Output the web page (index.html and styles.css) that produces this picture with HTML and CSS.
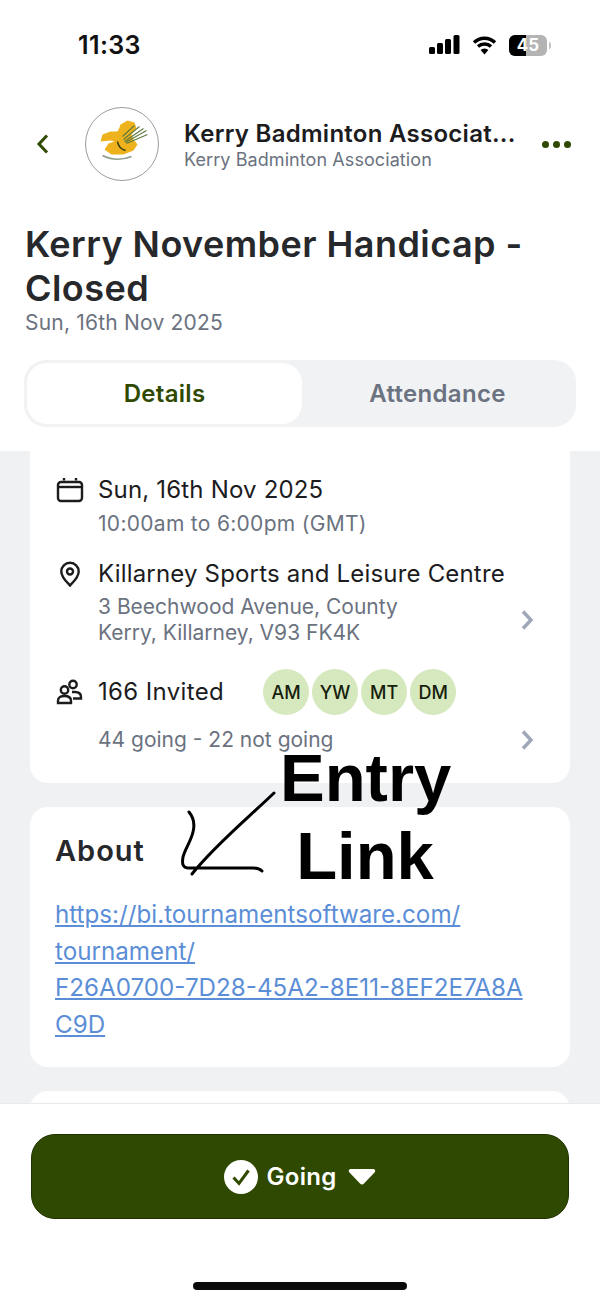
FILE: index.html
```html
<!DOCTYPE html>
<html lang="en">
<head>
<meta charset="utf-8">
<title>Kerry November Handicap</title>
<link rel="stylesheet" href="styles.css">
</head>
<body>
<div class="screen">
  <div class="status">
    <span class="time">11:33</span>
    <div class="status-icons">
      <svg class="signal" width="31" height="20" viewBox="0 0 31 20"><rect x="0" y="12" width="6" height="7" rx="1.5"/><rect x="8" y="8" width="6" height="11" rx="1.5"/><rect x="16" y="4" width="6" height="15" rx="1.5"/><rect x="24.500" y="0" width="6" height="19" rx="1.5"/></svg>
      <svg class="wifi" width="25" height="19" viewBox="0 0 24 19"><path d="M1.500 6.500a15 15 0 0 1 21 0M5.500 10.500a9.500 9.500 0 0 1 13 0" fill="none" stroke="#000" stroke-width="3.400" /><path d="M12 18.500l-3.900-4.500a5.500 5.500 0 0 1 7.800 0z"/></svg>
      <div class="battery"><span class="battery-fill"></span><span class="battery-num">45</span></div>
      <span class="battery-cap"></span>
    </div>
  </div>

  <header class="head">
    <svg class="back" width="14" height="22" viewBox="0 0 14 22"><path d="M11 2.500 3 11l8 8.500" fill="none" stroke="#2f4a00" stroke-width="3"/></svg>
    <div class="logo">
      <svg width="71" height="71" viewBox="1.500 1.500 71 71">
        <path d="M36 18 43 14 50 16 52 22 47 28 49 33 53 38 49 44 39 48 27 48 20 43 24 37 30 35 26 34 16 35 18 28 26 25 33 25 35 21Z" fill="#eeb31c"/>
        <path d="M40 35 59 22M41 36 62 24M42 37 63 28M38 30 50 19M39 33 55 20" stroke="#5f7a3e" stroke-width="1.100" fill="none"/>
        <path d="M33 35q1 7 8 9" stroke="#2c3a12" stroke-width="1.500" fill="none"/>
        <path d="M18 49q14 7 29 1" stroke="#8f9f8c" stroke-width="1.600" fill="none"/>
      </svg>
    </div>
    <div class="org">
      <div class="org-name">Kerry Badminton Associat...</div>
      <div class="org-sub">Kerry Badminton Association</div>
    </div>
    <div class="dots"><i></i><i></i><i></i></div>
  </header>

  <div class="heading">
    <h1>Kerry November Handicap - Closed</h1>
    <p>Sun, 16th Nov 2025</p>
  </div>

  <div class="tabs">
    <div class="tab active">Details</div>
    <div class="tab">Attendance</div>
  </div>

  <main class="scroll">
    <section class="card info">
      <div class="row date">
        <svg class="ico" width="28" height="26" viewBox="0 0 28 26"><rect x="2" y="5" width="24" height="19" rx="3" fill="none" stroke="#1c1c1e" stroke-width="2.400"/><path d="M2 10h24" stroke="#1c1c1e" stroke-width="2.400"/><path d="M8 1v2.500M20 1v2.500" stroke="#1c1c1e" stroke-width="2.400"/></svg>
        <div class="row-text">
          <div class="main-line">Sun, 16th Nov 2025</div>
          <div class="sub-line wide">10:00am to 6:00pm (GMT)</div>
        </div>
      </div>
      <div class="row place">
        <svg class="ico" width="28" height="26" viewBox="0 0 28 26"><path d="M14 24.500c-1-1.500-8.700-7.500-8.700-14a8.700 8.700 0 0 1 17.400 0c0 6.500-7.700 12.500-8.700 14z" fill="none" stroke="#1c1c1e" stroke-width="2.400"/><circle cx="14" cy="10.500" r="3" fill="none" stroke="#1c1c1e" stroke-width="2.400"/></svg>
        <div class="row-text">
          <div class="main-line">Killarney Sports and Leisure Centre</div>
          <div class="sub-line address">3 Beechwood Avenue, County<br>Kerry, Killarney, V93 FK4K</div>
        </div>
        <svg class="chev" width="14" height="22" viewBox="0 0 14 22"><path d="M3 2.500 11 11l-8 8.500" fill="none" stroke="#a0a8b8" stroke-width="3.500"/></svg>
      </div>
      <div class="row invited">
        <svg class="ico" width="28" height="26" viewBox="0 0 28 26"><circle cx="17" cy="5.500" r="3.700" fill="none" stroke="#1c1c1e" stroke-width="2.400"/><circle cx="8.500" cy="11" r="3.700" fill="none" stroke="#1c1c1e" stroke-width="2.400"/><path d="M2 24v-2.500c0-3 3-4.500 6.500-4.500s6.500 1.500 6.500 4.500V24z" fill="none" stroke="#1c1c1e" stroke-width="2.400"/><path d="M16 13h3c3.500 0 6 1.500 6 5v1.500h-8" fill="none" stroke="#1c1c1e" stroke-width="2.400"/></svg>
        <div class="main-line invited-label">166 Invited</div>
        <div class="avatars">
          <span>AM</span><span>YW</span><span>MT</span><span>DM</span>
        </div>
      </div>
      <div class="row going">
        <div class="sub-line">44 going - 22 not going</div>
        <svg class="chev" width="14" height="22" viewBox="0 0 14 22"><path d="M3 2.500 11 11l-8 8.500" fill="none" stroke="#a0a8b8" stroke-width="3.500"/></svg>
      </div>
    </section>

    <section class="card about">
      <h2>About</h2>
      <a class="link" href="#">https://bi.tournamentsoftware.com/<br>tournament/<br>F26A0700-7D28-45A2-8E11-8EF2E7A8A<br>C9D</a>
    </section>

    <section class="card stub"></section>

    <div class="note">
      <svg class="scribble" width="100" height="90" viewBox="0 0 100 90"><path d="M94 3C68 28 34 56 12 84M9 22c5 6 6 12 4 20-2 9-8 17-10 25-1 6-1 11 6 11h64c4 0 7 1 9 3" fill="none" stroke="#000" stroke-width="3" stroke-linecap="round"/></svg>
      <div class="note-text">Entry<br>Link</div>
    </div>
  </main>

  <footer class="foot">
    <button class="going-btn">
      <svg width="34" height="34" viewBox="0 0 34 34"><circle cx="17" cy="17" r="17" fill="#fff"/><path d="M9.500 17.500l5.500 6 9.500-13" fill="none" stroke="#2f4a00" stroke-width="3"/></svg>
      <span>Going</span>
      <svg width="28" height="18" viewBox="0 0 28 18"><path d="M3 1h22c2 0 3 2 1.500 3.500L16 15.500c-1.200 1.200-2.800 1.200-4 0L1.500 4.500C0 3 1 1 3 1z" fill="#fff"/></svg>
    </button>
    <div class="home-bar"></div>
  </footer>
</div>
</body>
</html>
```

FILE: styles.css
```css
* { box-sizing: border-box; }
html, body { margin: 0; padding: 0; background: #fff; }
body { font-family: Inter, "Liberation Sans", sans-serif; color: #1f2023; }
.screen { width: 600px; height: 1302px; display: flex; flex-direction: column; overflow: hidden; background: #fff; }

.status { height: 88px; padding: 29px 49px 0 78px; display: flex; justify-content: space-between; align-items: flex-start; }
.time { font-size: 25px; font-weight: 600; line-height: 32px; letter-spacing: .4px; color: #111; }
.status-icons { display: flex; align-items: center; gap: 12px; height: 32px; }
.signal, .wifi { display: block; }
.battery { position: relative; width: 38px; height: 21px; border-radius: 6px; background: #b4b4b4; overflow: hidden; text-align: center; font-size: 17px; font-weight: 700; line-height: 21px; color: #fff; }
.battery-fill { position: absolute; left: 0; top: 0; bottom: 0; width: 17px; background: #000; }
.battery-num { position: relative; }
.battery-cap { width: 2px; height: 7px; margin-left: -10px; background: #c4c4c4; border-radius: 0 2px 2px 0; }

.head { display: flex; align-items: center; height: 74px; margin-top: 19px; padding: 0 29px 0 36px; }
.back { flex: none; }
.logo { width: 74px; height: 74px; flex: none; margin-left: 35px; border: 1.500px solid #9c9c9c; border-radius: 50%; }
.logo svg { display: block; }
.org { margin-left: 25px; padding-top: 2px; flex: 1; min-width: 0; }
.org-name { font-size: 24px; font-weight: 600; line-height: 29px; letter-spacing: .27px; white-space: nowrap; color: #1c1c1e; }
.org-sub { font-size: 18px; line-height: 24px; letter-spacing: .08px; color: #6b7280; }
.dots { display: flex; gap: 4px; flex: none; }
.dots i { width: 7px; height: 7px; border-radius: 50%; background: #2f4a00; }

.heading { padding: 0 25px; margin-top: 41px; }
.heading h1 { margin: 0; font-size: 36px; font-weight: 600; line-height: 44px; letter-spacing: .45px; color: #27282b; }
.heading p { margin: 0; font-size: 21px; line-height: 25px; letter-spacing: .2px; color: #6b7280; }

.tabs { display: flex; margin: 25px 24px 0; height: 67px; padding: 3px; border-radius: 22px; background: #f1f2f4; }
.tab { width: 272px; display: flex; align-items: center; justify-content: center; border-radius: 20px; font-size: 24px; font-weight: 600; letter-spacing: .3px; color: #6b7280; }
.tab.active { width: 276px; background: #fff; color: #2f4a00; }

.scroll { position: relative; height: 652px; margin-top: 24px; padding: 0 30px; background: #f0f1f3; overflow: hidden; display: flex; flex-direction: column; gap: 24px; flex: none; }
.card { flex: none; background: #fff; border-radius: 18px; }
.info { height: 332px; border-radius: 0 0 18px 18px; padding: 0 26px; position: relative; }
.row { display: flex; align-items: flex-start; }
.ico { flex: none; margin-right: 14px; }
.row-text { flex: 1; min-width: 0; }
.main-line { font-size: 24px; line-height: 32px; letter-spacing: .18px; color: #1c1c1e; white-space: nowrap; }
.invited-label { letter-spacing: .36px; }
.sub-line { font-size: 21px; line-height: 26px; color: #6b7280; white-space: nowrap; }
.sub-line.wide { letter-spacing: .3px; }
.date { padding-top: 23px; }
.date .ico { margin-top: 3px; }
.date .sub-line { margin-top: 5px; }
.place { margin-top: 21px; position: relative; }
.place .ico { margin-top: 3px; }
.place .sub-line { margin-top: 4px; }
.chev { flex: none; margin-top: 51px; margin-right: 10px; }
.invited { margin-top: 23px; align-items: center; height: 46px; }
.avatars { display: flex; gap: 3px; margin-left: 39px; }
.avatars span { width: 46px; height: 46px; border-radius: 50%; background: #d6e8bd; color: #16200c; font-size: 18px; font-weight: 500; display: flex; align-items: center; justify-content: center; }
.going { margin-top: 12px; padding-left: 42px; justify-content: space-between; align-items: center; }
.going .chev { margin-top: 0; }

.about { height: 260px; padding: 26px 25px 0; }
.about h2 { margin: 0; font-size: 29px; font-weight: 600; line-height: 36px; letter-spacing: 1px; color: #27282b; }
.link { display: block; margin-top: 28px; font-size: 24.200px; line-height: 36.500px; color: #5b8ed6; text-decoration: underline; white-space: nowrap; }
.stub { height: 60px; }

.note { position: absolute; left: 180px; top: 288px; display: flex; }
.scribble { position: absolute; left: 0; top: 51px; }
.note-text { margin-left: 100px; width: 170px; text-align: center; font-family: "Liberation Sans", Arial, sans-serif; font-size: 67px; font-weight: 700; line-height: 78px; color: #000; }

.foot { flex: 1; background: #fff; border-top: 1px solid #e8e9ec; padding: 30px 31px 0; display: flex; flex-direction: column; align-items: center; }
.going-btn { width: 538px; height: 85px; flex: none; border: 1px solid #1f3300; border-radius: 24px; background: #2f4a00; color: #fff; font-family: inherit; font-size: 24px; font-weight: 600; letter-spacing: .3px; display: flex; align-items: center; justify-content: center; gap: 8px; padding: 0; }
.going-btn span { margin-right: 3px; }
.home-bar { width: 214px; height: 8px; margin-top: 63px; background: #0b0b0b; border-radius: 4px; }
```
